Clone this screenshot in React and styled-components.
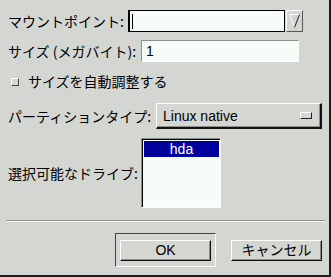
import React from 'react'
import styled, { createGlobalStyle } from 'styled-components'

const bg = '#d4d6d1'
const field = '#f6fcf7'
const shadow = '#8d8f8b'

const GlobalStyle = createGlobalStyle`
  body {
    margin: 0;
    background: ${bg};
    font-family: "Noto Sans CJK JP", "DejaVu Sans", sans-serif;
    font-size: 14px;
    color: #000;
  }
`

const Dialog = styled.div`
  width: 331px;
  height: 277px;
  box-sizing: border-box;
  background: ${bg};
  border-right: 2px solid #1c1c1c;
  border-bottom: 2px solid #1c1c1c;
  padding: 10px 0 0 8px;
  display: flex;
  flex-direction: column;
`

const Row = styled.div`
  display: flex;
  align-items: center;
  height: ${({ h }) => h}px;
  margin-top: ${({ top }) => top || 0}px;
`

const Label = styled.div`
  width: ${({ w }) => w}px;
  flex: none;
  white-space: nowrap;
  line-height: 16px;
`

const Entry = styled.div`
  box-sizing: border-box;
  width: ${({ w }) => w}px;
  height: 22px;
  background: ${field};
  display: flex;
  align-items: center;
  padding-left: 4px;
  font-family: "Liberation Sans", Arial, sans-serif;
  border-top: 1px solid ${({ focused }) => (focused ? '#000' : shadow)};
  border-left: 1px solid ${({ focused }) => (focused ? '#000' : shadow)};
  border-bottom: 1px solid ${({ focused }) => (focused ? '#000' : '#fff')};
  border-right: 1px solid ${({ focused }) => (focused ? '#000' : '#fff')};
  box-shadow: ${({ focused }) => (focused ? 'inset 1px 0 0 #000' : 'none')};
`

const Cursor = styled.span`
  display: block;
  width: 1px;
  height: 15px;
  background: #000;
  margin-left: -1px;
`

const ComboButton = styled.div`
  box-sizing: border-box;
  width: 17px;
  height: 22px;
  margin-left: 1px;
  background: ${bg};
  border-top: 1px solid #fff;
  border-left: 1px solid #fff;
  border-right: 1px solid #555;
  border-bottom: 1px solid #555;
  display: flex;
  align-items: center;
  justify-content: center;
`

const CheckRow = styled(Row)`
  gap: 9px;
  padding-left: 3px;
`

const CheckBox = styled.span`
  box-sizing: border-box;
  width: 8px;
  height: 8px;
  margin-top: 1px;
  background: ${bg};
  border-top: 1px solid #fff;
  border-left: 1px solid #fff;
  border-right: 1px solid #444;
  border-bottom: 1px solid #444;
`

const OptionMenu = styled.div`
  box-sizing: border-box;
  width: 166px;
  height: 26px;
  background: ${bg};
  border-top: 1px solid #fff;
  border-left: 1px solid #fff;
  border-right: 2px solid #111;
  border-bottom: 2px solid #111;
  box-shadow: inset -1px -1px 0 ${shadow};
  display: flex;
  align-items: center;
  justify-content: space-between;
  padding: 0 8px 0 6px;
  font-family: "Liberation Sans", Arial, sans-serif;
`

const Indicator = styled.span`
  box-sizing: border-box;
  width: 12px;
  height: 7px;
  border-top: 1px solid #fff;
  border-left: 1px solid #fff;
  border-right: 1px solid #222;
  border-bottom: 1px solid #222;
`

const List = styled.div`
  box-sizing: border-box;
  width: 80px;
  height: 70px;
  background: ${field};
  border-top: 1px solid ${shadow};
  border-left: 1px solid ${shadow};
  border-right: 1px solid #fff;
  border-bottom: 1px solid #fff;
  box-shadow: inset 1px 1px 0 #000;
  padding: 2px 1px 0 2px;
`

const ListItem = styled.div`
  height: 16px;
  line-height: 16px;
  text-align: center;
  background: ${({ selected }) => (selected ? '#00009c' : 'transparent')};
  color: ${({ selected }) => (selected ? '#fff' : '#000')};
  font-family: "Liberation Sans", Arial, sans-serif;
`

const Separator = styled.div`
  margin: 12px 0 0 -2px;
  width: 319px;
  height: 1px;
  background: ${shadow};
  border-bottom: 1px solid #fff;
`

const ButtonBar = styled.div`
  display: flex;
  align-items: center;
  margin-top: 11px;
  padding-left: 107px;
  gap: 15px;
`

const DefaultFrame = styled.div`
  box-sizing: border-box;
  width: 101px;
  height: 34px;
  border-top: 1px solid #444;
  border-left: 1px solid #444;
  border-right: 1px solid #fff;
  border-bottom: 1px solid #fff;
  display: flex;
  align-items: center;
  justify-content: center;
`

const Button = styled.div`
  box-sizing: border-box;
  width: 91px;
  height: 21px;
  background: ${bg};
  border-top: 1px solid #fff;
  border-left: 1px solid #fff;
  border-right: 1px solid #111;
  border-bottom: 1px solid #111;
  box-shadow: inset -1px -1px 0 ${shadow};
  display: flex;
  align-items: center;
  justify-content: center;
  line-height: 16px;
  font-family: "Liberation Sans", "Noto Sans CJK JP", sans-serif;
`

const DownArrow = () => (
  <svg width="11" height="14" viewBox="0 0 11 14">
    <line x1="0.5" y1="0.5" x2="10.5" y2="0.5" stroke="#fff" />
    <line x1="0.5" y1="0.5" x2="5.5" y2="13.5" stroke="#fff" />
    <line x1="10.5" y1="0.5" x2="5.5" y2="13.5" stroke="#222" />
  </svg>
)

const App = () => {
  return (
    <>
      <GlobalStyle />
      <Dialog>
        <Row h={22}>
          <Label w={120}>マウントポイント:</Label>
          <Entry w={157} focused><Cursor /></Entry>
          <ComboButton><DownArrow /></ComboButton>
        </Row>
        <Row h={22} top={8}>
          <Label w={133}>サイズ (メガバイト):</Label>
          <Entry w={158}>1</Entry>
        </Row>
        <CheckRow h={18} top={10}>
          <CheckBox />
          <span>サイズを自動調整する</span>
        </CheckRow>
        <Row h={26} top={13}>
          <Label w={148}>パーティションタイプ:</Label>
          <OptionMenu>
            Linux native
            <Indicator />
          </OptionMenu>
        </Row>
        <Row h={70} top={9}>
          <Label w={133}>選択可能なドライブ:</Label>
          <List>
            <ListItem selected>hda</ListItem>
          </List>
        </Row>
        <Separator />
        <ButtonBar>
          <DefaultFrame>
            <Button>OK</Button>
          </DefaultFrame>
          <Button>キャンセル</Button>
        </ButtonBar>
      </Dialog>
    </>
  )
}

export default App
